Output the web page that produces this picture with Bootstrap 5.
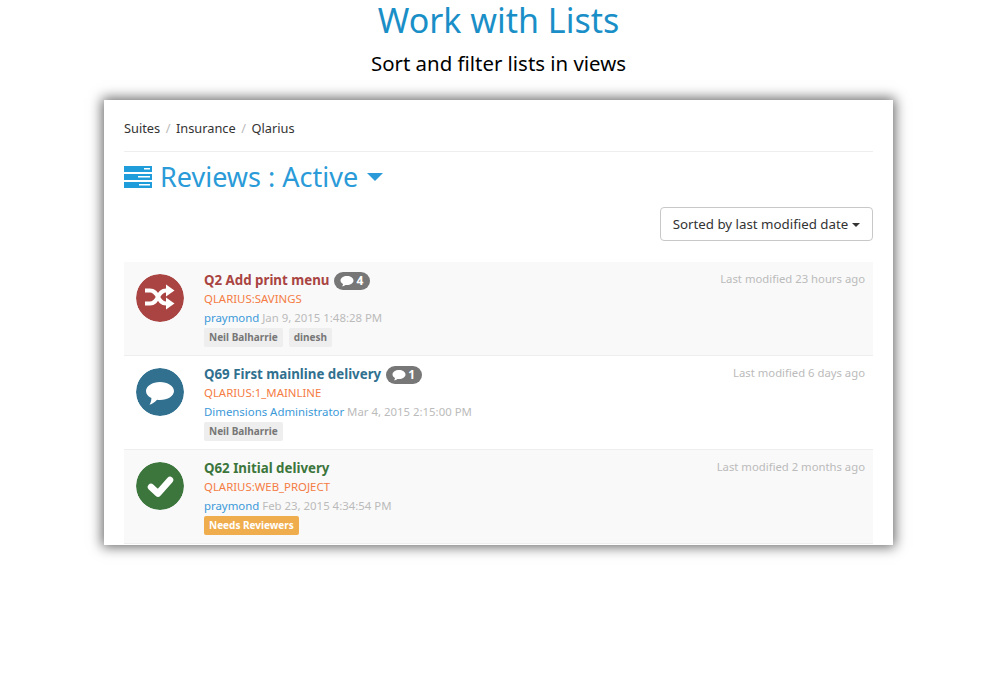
<!DOCTYPE html>
<html lang="en">
<head>
<meta charset="utf-8">
<title>Work with Lists</title>
<link href="https://cdn.jsdelivr.net/npm/bootstrap@5.3.0/dist/css/bootstrap.min.css" rel="stylesheet">
<style>
html,body{background:#fff;height:100%;overflow:hidden}
body{font-family:"Noto Sans","Open Sans","Liberation Sans",sans-serif;font-size:12px;color:#333}
.hero-title{font-size:34px;line-height:40px;color:#1a8fc7;font-weight:400;margin:0;text-align:center;padding-left:2px}
.hero-sub{font-size:20.4px;line-height:30px;color:#000;margin:0;text-align:center;padding-left:2px;padding-top:8px}
.stage{width:789px;height:445px;margin:22px 0 0 104px;background:#fff;box-shadow:0 0 12px 2px rgba(0,0,0,.6);padding:0 20px;overflow:hidden}
.crumbs{height:52px;border-bottom:1px solid #eee;font-size:12.8px;color:#333;gap:5.5px;padding-top:6px}
.crumbs i{font-style:normal;color:#bbb}
.view-head{font-size:27px;line-height:36px;color:#2a9bd8;margin:7px 0 0;font-weight:400;gap:8px}
.sorter{font-size:13.3px;height:34px;width:213px;margin-top:12px;border:1px solid #c8c8c8;border-radius:4px;color:#333;background:#fff;padding:1px 0 0}
.sorter-wrap{height:67px}
.caret-d{display:inline-block;width:0;height:0;border:4.5px solid transparent;border-top-color:#333;border-bottom:0;margin-left:4px;vertical-align:2px}
.caret-b{display:inline-block;width:0;height:0;border:8.5px solid transparent;border-top:8.5px solid #2a9bd8;border-bottom:0;margin-left:1px}
.rev-row{height:94px;border-bottom:1px solid #eee;padding:12px 8px 0 12px;gap:20px}
.rev-row.shade{background:#f9f9f9}
.rev-ic{width:48px;height:48px;border-radius:50%;flex:none}
.rev-body{flex:1;min-width:0}
.rev-t{font-size:13.3px;line-height:13px;font-weight:700;display:flex;align-items:center;gap:5px;height:13px}
.chip{background:#777;color:#fff;border-radius:9px;font-size:12px;height:18px;line-height:18px;padding:0 7px 0 6px;display:inline-flex;align-items:center;gap:2px}
.proj{color:#f57c44;font-size:11.4px;line-height:18px;margin-top:3px}
.meta{font-size:11.4px;line-height:18px;margin-top:1px;color:#bbb}
.meta b{font-weight:400;color:#3b99d9}
.tags{display:flex;gap:6px;margin-top:1px}
.tagx{background:#eee;color:#777;font-weight:700;font-size:10px;height:19px;line-height:19px;padding:0 5px;border-radius:2px}
.tagx.warn{background:#f0ad4e;color:#fff}
.stamp{font-size:11.3px;color:#bbb;line-height:14px;margin-top:-2px}
</style>
</head>
<body>
<h1 class="hero-title">Work with Lists</h1>
<p class="hero-sub">Sort and filter lists in views</p>
<div class="stage">
  <div class="crumbs d-flex align-items-center"><span>Suites</span><i>/</i><span>Insurance</span><i>/</i><span>Qlarius</span></div>
  <h2 class="view-head d-flex align-items-center">
    <svg width="28" height="22" viewBox="0 0 28 22"><path fill="#1f9ddb" d="M0 0h28v6H0zM0 8h28v6H0zM0 16h28v6H0z"/><path fill="#fff" d="M20 2h6v1.500h-6zM14 10h12v1.500H14zM15 18h11v1.500H15z"/></svg>
    <span>Reviews : Active</span><span class="caret-b"></span>
  </h2>
  <div class="sorter-wrap d-flex justify-content-end"><button type="button" class="btn sorter align-self-start">Sorted by last modified date<span class="caret-d"></span></button></div>
  <div class="rev-row shade d-flex">
    <svg class="rev-ic" viewBox="0 0 48 48"><circle cx="24" cy="24" r="24" fill="#a94442"/><path fill="none" stroke="#fff" stroke-width="4" d="M9 16.500h5c4.500 0 6 3 8 6.500s3.500 6.500 8 6.500h2M9 29.500h5c4.500 0 6-3 8-6.500s3.500-6.500 8-6.500h2"/><path fill="#fff" d="M30 10.500l8.500 6-8.500 6zM30 23.500l8.500 6-8.500 6z"/></svg>
    <div class="rev-body">
      <div class="rev-t" style="color:#a94442">Q2 Add print menu <span class="chip"><svg width="14" height="12" viewBox="0 0 14 12"><path fill="#fff" d="M7 1c3.500 0 6.500 2 6.500 4.500S10.500 10 7 10c-.5 0-1 0-1.500-.1C4.500 10.800 3.200 11.200 2 11.300c.7-.7 1-1.500 1-2.300C1.500 8.200.5 7 .5 5.500.5 3 3.500 1 7 1z"/></svg>4</span></div>
      <div class="proj">QLARIUS:SAVINGS</div>
      <div class="meta"><b>praymond</b> Jan 9, 2015 1:48:28 PM</div>
      <div class="tags"><span class="tagx">Neil Balharrie</span><span class="tagx">dinesh</span></div>
    </div>
    <div class="stamp">Last modified 23 hours ago</div>
  </div>
  <div class="rev-row d-flex">
    <svg class="rev-ic" viewBox="0 0 48 48"><circle cx="24" cy="24" r="24" fill="#31708f"/><path fill="#fff" d="M24 14c7.700 0 14 4 14 9s-6.300 9-14 9c-1 0-2 0-3-.2-2.200 2.400-4.500 4.200-7.500 5 1-1.500 1.800-3.600 1.900-6.700C12 28.500 10 26 10 23c0-5 6.300-9 14-9z"/></svg>
    <div class="rev-body">
      <div class="rev-t" style="color:#31708f">Q69 First mainline delivery <span class="chip"><svg width="14" height="12" viewBox="0 0 14 12"><path fill="#fff" d="M7 1c3.500 0 6.500 2 6.500 4.500S10.500 10 7 10c-.5 0-1 0-1.500-.1C4.500 10.800 3.200 11.200 2 11.300c.7-.7 1-1.500 1-2.300C1.500 8.200.5 7 .5 5.500.5 3 3.500 1 7 1z"/></svg>1</span></div>
      <div class="proj">QLARIUS:1_MAINLINE</div>
      <div class="meta"><b>Dimensions Administrator</b> Mar 4, 2015 2:15:00 PM</div>
      <div class="tags"><span class="tagx">Neil Balharrie</span></div>
    </div>
    <div class="stamp">Last modified 6 days ago</div>
  </div>
  <div class="rev-row shade d-flex">
    <svg class="rev-ic" viewBox="0 0 48 48"><circle cx="24" cy="24" r="24" fill="#3c763d"/><path fill="none" stroke="#fff" stroke-width="6.500" stroke-linecap="round" stroke-linejoin="round" d="M15 25l7 6.500L34 18"/></svg>
    <div class="rev-body">
      <div class="rev-t" style="color:#3c763d">Q62 Initial delivery</div>
      <div class="proj">QLARIUS:WEB_PROJECT</div>
      <div class="meta"><b>praymond</b> Feb 23, 2015 4:34:54 PM</div>
      <div class="tags"><span class="tagx warn">Needs Reviewers</span></div>
    </div>
    <div class="stamp">Last modified 2 months ago</div>
  </div>
</div>
</body>
</html>
